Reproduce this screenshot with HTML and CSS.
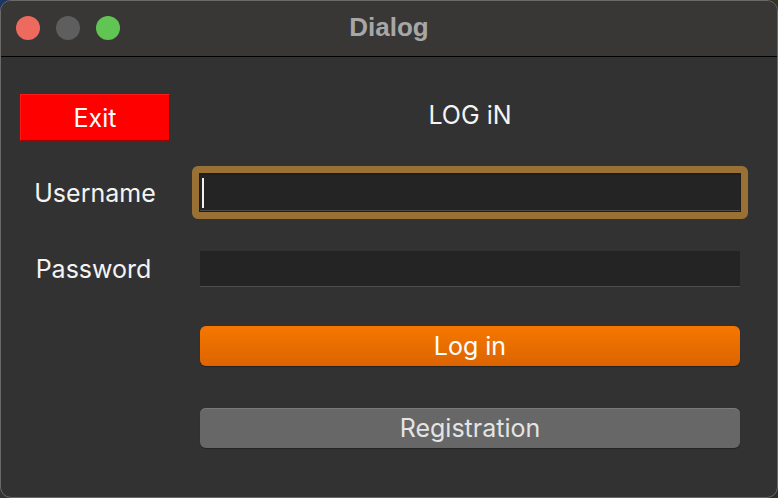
FILE: index.html
```html
<!DOCTYPE html>
<html>
<head>
<meta charset="utf-8">
<link rel="stylesheet" href="styles.css">
</head>
<body>
<div class="window">
  <div class="titlebar">
    <div class="lights">
      <span class="light red"></span>
      <span class="light gray"></span>
      <span class="light green"></span>
    </div>
    <div class="title">Dialog</div>
  </div>
  <div class="content">
    <div class="row row1">
      <div class="left"><button class="exit">Exit</button></div>
      <div class="right heading">LOG iN</div>
    </div>
    <div class="row row2">
      <div class="left label">Username</div>
      <div class="right">
        <div class="ring"><div class="field focused"><span class="caret"></span></div></div>
      </div>
    </div>
    <div class="row row3">
      <div class="left label">Password</div>
      <div class="right"><div class="field"></div></div>
    </div>
    <div class="row row4">
      <div class="left"></div>
      <div class="right"><button class="btn login">Log in</button></div>
    </div>
    <div class="row row5">
      <div class="left"></div>
      <div class="right"><button class="btn reg">Registration</button></div>
    </div>
  </div>
</div>
</body>
</html>
```
FILE: styles.css
```css
* { box-sizing: border-box; }
html, body { margin: 0; padding: 0; }
body {
  width: 778px;
  height: 498px;
  background: linear-gradient(135deg, #1e3763 0%, #3a3328 50%, #2c3320 100%);
  font-family: Inter, "Liberation Sans", sans-serif;
  overflow: hidden;
}
.window {
  width: 778px;
  height: 498px;
  border-radius: 11px;
  border: 1px solid #6a6a6a;
  background: #323232;
  overflow: hidden;
  display: flex;
  flex-direction: column;
}
.titlebar {
  height: 56px;
  flex: none;
  background: #383736;
  border-bottom: 1px solid #000;
  position: relative;
  display: flex;
  align-items: center;
  justify-content: center;
}
.lights {
  position: absolute;
  left: 15px;
  top: 15px;
  display: flex;
  gap: 16px;
}
.light {
  width: 24px;
  height: 24px;
  border-radius: 50%;
  display: block;
}
.light.red { background: #ed6a5e; }
.light.gray { background: #5e5e5e; }
.light.green { background: #61c554; }
.title {
  font-family: "Liberation Sans", Arial, sans-serif;
  font-weight: bold;
  font-size: 26px;
  color: #a7a7a7;
  margin-top: -2px;
}
.content {
  flex: 1;
  padding: 37px 37px 0 19px;
  display: flex;
  flex-direction: column;
}
.row {
  display: flex;
  align-items: center;
}
.left {
  width: 150px;
  flex: none;
  display: flex;
  justify-content: center;
}
.right {
  margin-left: 30px;
  flex: 1;
}
.row1 { height: 47px; }
.row2 { height: 53px; margin-top: 25px; }
.row3 { height: 36px; margin-top: 32px; }
.row4 { height: 40px; margin-top: 39px; }
.row5 { height: 40px; margin-top: 42px; }
.label {
  color: #f4f4f4;
  font-size: 25px;
}
.row3 .label { padding-right: 3px; }
.heading {
  color: #f4f4f4;
  font-size: 25px;
  text-align: center;
  padding-bottom: 6px;
}
.exit {
  width: 150px;
  height: 47px;
  background: #ff0000;
  border: 1px solid #ff1a1a;
  border-right-color: #9a0000;
  border-bottom-color: #9a0000;
  color: #fff;
  font-family: Inter, "Liberation Sans", sans-serif;
  font-size: 25px;
  padding: 0;
}
.ring {
  margin: 0 -8px;
  border: 7px solid #9a7134;
  border-radius: 6px;
  padding: 1px;
  background: #1e1e1e;
}
.field {
  height: 36px;
  background: #242424;
  border-bottom: 1px solid #4c4c4c;
  position: relative;
}
.field.focused {
  height: 37px;
  border-top: 1px solid #1d1d1d;
}
.caret {
  position: absolute;
  left: 2px;
  top: 3px;
  width: 2px;
  height: 30px;
  background: #f0f0f0;
}
.btn {
  width: 100%;
  height: 40px;
  border: none;
  border-radius: 6px;
  font-family: Inter, "Liberation Sans", sans-serif;
  font-size: 25px;
  padding: 0;
}
.login {
  background: linear-gradient(#f67800, #dc6400);
  color: #fff;
  box-shadow: 0 1px 1px rgba(0,0,0,0.35);
}
.reg {
  background: #676767;
  color: #e4e4e4;
  box-shadow: inset 0 1px 0 #7a7a7a, 0 1px 1px rgba(0,0,0,0.3);
}
```
